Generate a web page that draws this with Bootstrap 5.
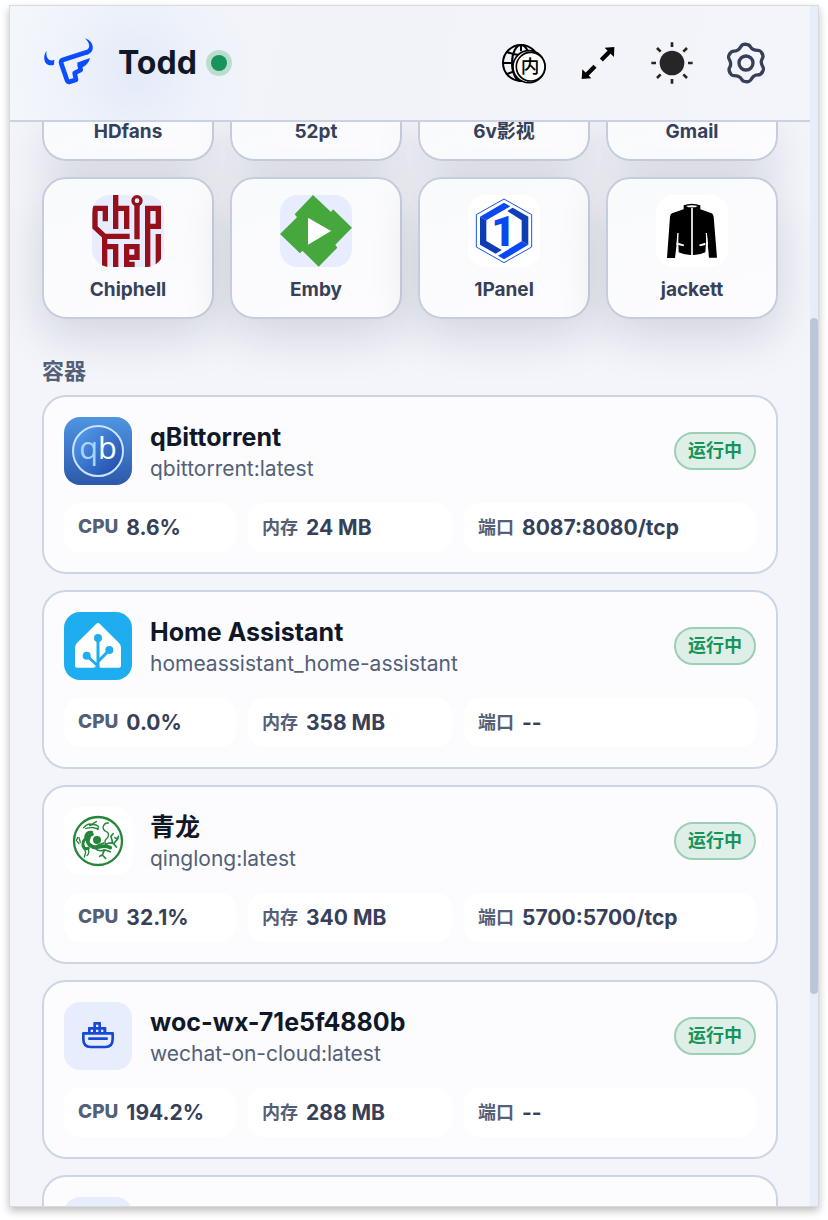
<!DOCTYPE html>
<html lang="zh-CN">
<head>
  <meta charset="UTF-8" />
  <meta name="viewport" content="width=device-width, initial-scale=1.0"/>
  <title>Todd</title>

  <!-- Bootstrap 5 CSS -->
  <link href="https://cdn.jsdelivr.net/npm/bootstrap@5.3.2/dist/css/bootstrap.min.css" rel="stylesheet" />

  <style>
    body {
      background: #fff;
      color: #374059;
      font-family: Inter, 'Noto Sans CJK SC', sans-serif;
    }

    .app-page {
      height: 100vh;
      padding: 5px 9px 13px 9px;
    }

    .app-window {
      border: 1px solid #d9dade;
      box-shadow: 0 4px 8px rgba(0, 0, 0, 0.25);
      background: #f4f5fb;
    }

    /* Header */
    .app-header {
      position: relative;
      z-index: 1;
      height: 116px;
      padding: 0 32px;
      border-bottom: 2px solid #c8d2e2;
      background: radial-gradient(circle at 125px 66px, #e3eaf8 0, rgba(235, 240, 250, 0.6) 70px, rgba(243, 244, 249, 0) 120px), linear-gradient(100deg, #f3f6fb, #f2f3f9 40%, #f4f5fa);
    }

    .brand-name {
      margin-left: 24px;
      font-size: 32px;
      line-height: 40px;
      font-weight: 700;
      color: #101828;
    }

    .online-dot {
      width: 16px;
      height: 16px;
      margin-left: 14px;
      border-radius: 50%;
      background: #18935a;
      box-shadow: 0 0 0 5px #bbddd0;
    }

    .tool-list {
      gap: 10px;
    }

    .tool-btn {
      width: 64px;
      height: 64px;
      padding: 0;
      border: 0;
      background: none;
    }

    /* Bookmark tiles */
    .app-main {
      padding: 0 32px;
    }

    .tile-grid {
      display: grid;
      grid-template-columns: repeat(4, 1fr);
      gap: 16px;
    }

    .tile {
      padding: 16px 16px 15px;
      border: 2px solid #c5cddd;
      border-radius: 24px;
      background: linear-gradient(160deg, #f9fafc, #fcfcfe);
      box-shadow: 0 16px 48px rgba(15, 23, 42, 0.15);
      color: #374059;
      font-size: 19px;
      line-height: 24px;
      font-weight: 700;
      text-decoration: none;
    }

    .tile-clipped {
      height: 39px;
      padding: 0 16px 18px;
      border-top: 0;
      border-radius: 0 0 24px 24px;
      line-height: 18px;
    }

    .tile-icon {
      width: 72px;
      height: 72px;
      margin-bottom: 11px;
      border-radius: 18px;
      background: #e7ecfe;
    }

    /* Containers */
    .section-title {
      margin: 36px 0 8px;
      font-size: 22px;
      line-height: 32px;
      font-weight: 700;
      color: #536077;
    }

    .box-card {
      padding: 20px;
      border: 2px solid #ccd5e3;
      border-radius: 24px;
      background: #fcfcfe;
    }

    .box-icon {
      width: 68px;
      height: 68px;
      border-radius: 16px;
      background: #e7edfd;
    }

    .icon-white {
      background: #fff;
    }

    .box-head {
      gap: 18px;
    }

    .box-text {
      padding-top: 4px;
    }

    .box-name {
      margin: 0;
      font-size: 25px;
      line-height: 32px;
      font-weight: 700;
      color: #101828;
    }

    .box-image {
      margin: 0;
      font-size: 21px;
      line-height: 32px;
      color: #536077;
    }

    .state-pill {
      padding: 4px 12px;
      border: 2px solid #9dcfb7;
      border-radius: 19px;
      background: #deefe8;
      color: #18935a;
      font-size: 18px;
      line-height: 26px;
      font-weight: 700;
    }

    .stat-grid {
      display: grid;
      grid-template-columns: 43fr 51fr 73fr;
      gap: 12px;
      margin: 18px 0 0;
    }

    .stat {
      height: 49px;
      padding: 0 14px;
      border-radius: 16px;
      background: #fff;
      font-weight: 700;
      gap: 8px;
    }

    .stat dt {
      font-size: 18px;
      color: #536077;
    }

    .stat dd {
      margin: 0;
      font-size: 21px;
    }

    .stat dt.latin {
      font-size: 19px;
      font-weight: 800;
    }

    /* Scroll track */
    .scroll-track {
      width: 8px;
      background: #e7eef9;
    }

    .scroll-thumb {
      flex: 676 0 0;
      border-radius: 4px;
      background: #bdc6d9;
    }

    .scroll-before {
      flex: 312 0 0;
    }

    .scroll-after {
      flex: 212 0 0;
    }
  </style>
</head>
<body>

<svg class="d-none" aria-hidden="true">
  <symbol id="ship" viewBox="102 96 204 204">
    <path d="M160 190H248V207Q248 231 226 231H182Q160 231 160 207Z" fill="none" stroke="#1748d8" stroke-width="8" stroke-linejoin="round"/>
    <path d="M178 206H230" stroke="#1748d8" stroke-width="8" stroke-linecap="round"/>
    <path d="M190 158Q190 156 192 156H211Q213 156 213 158V171H227Q229 171 229 173V188H174V173Q174 171 176 171H190Z" fill="#1748d8"/>
    <path d="M198 164h7v7h-7zM182 179h7v7h-7zM198 179h7v7h-7zM213 179h7v7h-7z" fill="#e7edfd"/>
  </symbol>
</svg>

<div class="app-page">
  <div class="app-window d-flex h-100 overflow-hidden">
    <div class="d-flex flex-column flex-grow-1 overflow-hidden">

      <!-- Header -->
      <header class="app-header d-flex align-items-center flex-shrink-0">
        <svg width="52" height="50" viewBox="126 114 156 150" aria-hidden="true">
          <path d="M140 153C131 163 131 180 137 189C143 197 154 197 162 194L163 179C155 183 148 181 144 176C139 170 138 161 140 153Z" fill="#0b4dff"/>
          <path d="M254 115C270 119 281 133 278 148C276 157 269 162 260 164L256 152C266 148 269 142 267 133C265 125 260 120 254 115Z" fill="#0b4dff"/>
          <path d="M262 156L190 179Q181 182 184 191L201 241Q203 247 209 245L228 239L224 219L242 210L239 195L256 187" fill="none" stroke="#0b4dff" stroke-width="14" stroke-linejoin="round"/>
          <path d="M231 188L270 174Q266 193 247 202L240 204Z" fill="#0b4dff"/>
        </svg>
        <h1 class="brand-name mb-0">Todd</h1>
        <span class="online-dot"></span>
        <div class="tool-list d-flex ms-auto">
          <button type="button" class="tool-btn" aria-label="内">
            <svg width="46" height="42" viewBox="64 122 138 126">
              <g fill="none" stroke="#000" stroke-width="6">
                <circle cx="124" cy="185" r="54"/>
                <ellipse cx="124" cy="185" rx="27" ry="54"/>
                <path d="M70 185H120M124 131V150M82 152Q120 170 166 152M82 218Q96 211 112 209"/>
              </g>
              <circle cx="148" cy="196" r="48" fill="#fff" stroke="#000" stroke-width="5"/>
              <circle cx="153" cy="196" r="43" fill="#fff" stroke="#000" stroke-width="5"/>
              <text x="151" y="216" text-anchor="middle" font-size="56" font-weight="500">内</text>
            </svg>
          </button>
          <button type="button" class="tool-btn" aria-label="全屏">
            <svg width="36" height="36" viewBox="300 135 108 108">
              <path d="M364 180L390 154M345 199L319 225" stroke="#000" stroke-width="13"/>
              <path d="M403 141L402 171L374 143ZM305 237L307 208L334 235Z"/>
            </svg>
          </button>
          <button type="button" class="tool-btn" aria-label="主题">
            <svg width="44" height="44" viewBox="-66 -66 132 132" fill="#262626">
              <circle r="37"/>
              <path d="M0-62V-48M0 62V48M-62 0H-48M62 0H48M-45-45L-34-34M45 45L34 34M-45 45L-34 34M45-45L34-34" stroke="#262626" stroke-width="8"/>
            </svg>
          </button>
          <button type="button" class="tool-btn" aria-label="设置">
            <svg width="44" height="44" viewBox="-66 -66 132 132" fill="none" stroke="#374059" stroke-width="10" stroke-linecap="round">
              <circle r="21"/>
              <g id="gear-half">
                <path id="gear-arc" d="M0-56C17-56 9-45 23-40C37-35 42-43 48.500-28"/>
                <use href="#gear-arc" transform="rotate(60)"/>
                <use href="#gear-arc" transform="rotate(120)"/>
              </g>
              <use href="#gear-half" transform="rotate(180)"/>
            </svg>
          </button>
        </div>
      </header>

      <main class="app-main flex-grow-1 overflow-hidden">
        <!-- Bookmarks -->
        <div class="tile-grid">
          <a href="#" class="tile tile-clipped d-flex flex-column align-items-center justify-content-end"><span>HDfans</span></a>
          <a href="#" class="tile tile-clipped d-flex flex-column align-items-center justify-content-end"><span>52pt</span></a>
          <a href="#" class="tile tile-clipped d-flex flex-column align-items-center justify-content-end"><span>6v影视</span></a>
          <a href="#" class="tile tile-clipped d-flex flex-column align-items-center justify-content-end"><span>Gmail</span></a>

          <a href="#" class="tile d-flex flex-column align-items-center">
            <svg class="tile-icon" viewBox="186 90 216 216">
              <g fill="none" stroke="#960f1b" stroke-width="16">
                <path d="M226 169V130H195V187L224 214H299"/>
                <path d="M257 90V192M257 130H290V192"/>
                <path d="M321 120V223"/>
                <circle cx="321" cy="107" r="12" stroke-width="10"/>
                <path d="M353 306V130H385V184H353M385 207V306"/>
                <path d="M224 210V306M224 245H257V306"/>
                <path d="M314 298H290V245H321V277H290"/>
              </g>
            </svg>
            <span>Chiphell</span>
          </a>
          <a href="#" class="tile d-flex flex-column align-items-center">
            <svg class="tile-icon" viewBox="750 90 216 216">
              <path d="M849 90L903 141L909 133L966 188L916 239L922 248L866 305L817 257L810 265L750 207L801 157L794 148Z" fill="#46a83c"/>
              <path d="M834 158L903 198L834 239Z" fill="#fff"/>
            </svg>
            <span>Emby</span>
          </a>
          <a href="#" class="tile d-flex flex-column align-items-center">
            <svg class="tile-icon icon-white" viewBox="204 90 216 216">
              <path d="M312 102L395 149V246L312 293L229 246V149Z" fill="none" stroke="#1c55e8" stroke-width="3"/>
              <path d="M240 155L312 113L331 124L259 166Z" fill="#0a48f0"/>
              <path d="M240 155L259 166V228L305 255L287 266L240 239Z" fill="#0f3db5"/>
              <path d="M385 239L312 283L294 272L365 229Z" fill="#0a48f0"/>
              <path d="M322 138L338 128L385 155V239L365 229V166Z" fill="#0f3db5"/>
              <text x="310" y="243" text-anchor="middle" font-family="Roboto" font-size="126" font-weight="900" fill="#0a48f0">1</text>
            </svg>
            <span>1Panel</span>
          </a>
          <a href="#" class="tile d-flex flex-column align-items-center">
            <svg class="tile-icon icon-white" viewBox="768 90 216 216">
              <path d="M851 121Q875 112 901 121V133L935 145Q940 148 941 155L951 278H927L920 204L916 262Q896 272 875 270Q854 271 836 262L834 204L825 279H801L810 155Q811 148 816 145L851 133Z"/>
              <path d="M876 128V272" stroke="#fff" stroke-width="5"/>
              <path d="M858 123Q875 119 893 123L886 127H865ZM834 233L853 239L850 244L835 240ZM916 233L897 239L900 244L916 240Z" fill="#fff"/>
              <path d="M834 204L831 240M919 204L922 240" stroke="#fff" stroke-width="4"/>
            </svg>
            <span>jackett</span>
          </a>
        </div>

        <!-- Containers -->
        <h2 class="section-title">容器</h2>
        <div class="d-grid gap-3">
          <section class="box-card">
            <div class="box-head d-flex align-items-center">
              <svg class="box-icon" viewBox="102 81 204 204">
                <defs>
                  <linearGradient id="qb-back" x2="0" y2="1"><stop stop-color="#4f95e2"/><stop offset="1" stop-color="#2d58ab"/></linearGradient>
                  <linearGradient id="qb-disc" x2="1" y2="1"><stop stop-color="#5aa2f2"/><stop offset="1" stop-color="#1b46a6"/></linearGradient>
                </defs>
                <path d="M102 81h204v204h-204z" fill="url(#qb-back)"/>
                <circle cx="204" cy="183" r="75" fill="url(#qb-disc)" stroke="#c9e4fd" stroke-width="6"/>
                <text x="204" y="206" text-anchor="middle" font-family="Open Sans" font-size="92" fill="#a9d6fc">q<tspan fill="#fff">b</tspan></text>
              </svg>
              <div class="box-text flex-grow-1">
                <h3 class="box-name">qBittorrent</h3>
                <p class="box-image">qbittorrent:latest</p>
              </div>
              <span class="state-pill">运行中</span>
            </div>
            <dl class="stat-grid">
              <div class="stat d-flex align-items-center"><dt class="latin">CPU</dt><dd>8.6%</dd></div>
              <div class="stat d-flex align-items-center"><dt>内存</dt><dd>24 MB</dd></div>
              <div class="stat d-flex align-items-center"><dt>端口</dt><dd>8087:8080/tcp</dd></div>
            </dl>
          </section>

          <section class="box-card">
            <div class="box-head d-flex align-items-center">
              <svg class="box-icon" viewBox="102 66 204 204">
                <path d="M102 66h204v204h-204z" fill="#1eaef0"/>
                <path d="M199 101Q204 97 209 101L267 159Q273 165 273 173V227Q273 233 267 233H141Q135 233 135 227V173Q135 165 141 159Z" fill="#fff"/>
                <path d="M204 144V236M204 228L170 197M204 215L238 180" stroke="#1eaef0" stroke-width="9"/>
                <path d="M190 233H211L204 224Z" fill="#1eaef0"/>
                <g fill="#1eaef0"><circle cx="204" cy="144" r="12"/><circle cx="170" cy="197" r="12"/><circle cx="238" cy="180" r="12"/></g>
              </svg>
              <div class="box-text flex-grow-1">
                <h3 class="box-name">Home Assistant</h3>
                <p class="box-image">homeassistant_home-assistant</p>
              </div>
              <span class="state-pill">运行中</span>
            </div>
            <dl class="stat-grid">
              <div class="stat d-flex align-items-center"><dt class="latin">CPU</dt><dd>0.0%</dd></div>
              <div class="stat d-flex align-items-center"><dt>内存</dt><dd>358 MB</dd></div>
              <div class="stat d-flex align-items-center"><dt>端口</dt><dd>--</dd></div>
            </dl>
          </section>

          <section class="box-card">
            <div class="box-head d-flex align-items-center">
              <svg class="box-icon icon-white" viewBox="27 36 204 204">
                <g fill="none" stroke="#24863a" stroke-linecap="round" stroke-linejoin="round">
                  <circle cx="129" cy="138" r="72" stroke-width="7"/>
                  <path d="M86 98Q98 84 110 88L124 80M92 100L112 97L130 102M104 92Q118 84 130 94L128 104" stroke-width="4"/>
                  <path d="M110 112Q96 110 92 124M112 118Q96 124 86 138Q80 152 90 162L100 160" stroke-width="9"/>
                  <path d="M102 128Q94 140 104 150Q116 160 132 156Q150 150 166 158" stroke-width="11"/>
                  <path d="M88 160L92 172L88 186M98 160Q106 172 96 182M72 146L64 136L68 128M76 142L72 128" stroke-width="4"/>
                  <path d="M160 84Q146 84 144 98Q146 108 158 112Q164 120 156 130Q146 138 152 148" stroke-width="4"/>
                  <path d="M152 148Q168 140 176 146L188 132L190 124M176 146L184 156M172 140L168 124L174 116M188 132L180 128" stroke-width="5"/>
                  <path d="M120 160Q134 172 148 164L166 170M148 166L142 180L152 190M142 180L134 184M124 152L146 144" stroke-width="5"/>
                </g>
                <circle cx="126" cy="135" r="12" fill="#24863a"/>
              </svg>
              <div class="box-text flex-grow-1">
                <h3 class="box-name">青龙</h3>
                <p class="box-image">qinglong:latest</p>
              </div>
              <span class="state-pill">运行中</span>
            </div>
            <dl class="stat-grid">
              <div class="stat d-flex align-items-center"><dt class="latin">CPU</dt><dd>32.1%</dd></div>
              <div class="stat d-flex align-items-center"><dt>内存</dt><dd>340 MB</dd></div>
              <div class="stat d-flex align-items-center"><dt>端口</dt><dd>5700:5700/tcp</dd></div>
            </dl>
          </section>

          <section class="box-card">
            <div class="box-head d-flex align-items-center">
              <svg class="box-icon"><use href="#ship"/></svg>
              <div class="box-text flex-grow-1">
                <h3 class="box-name">woc-wx-71e5f4880b</h3>
                <p class="box-image">wechat-on-cloud:latest</p>
              </div>
              <span class="state-pill">运行中</span>
            </div>
            <dl class="stat-grid">
              <div class="stat d-flex align-items-center"><dt class="latin">CPU</dt><dd>194.2%</dd></div>
              <div class="stat d-flex align-items-center"><dt>内存</dt><dd>288 MB</dd></div>
              <div class="stat d-flex align-items-center"><dt>端口</dt><dd>--</dd></div>
            </dl>
          </section>

          <section class="box-card">
            <svg class="box-icon"><use href="#ship"/></svg>
          </section>
        </div>
      </main>
    </div>

    <div class="scroll-track d-flex flex-column flex-shrink-0" aria-hidden="true">
      <div class="scroll-before"></div>
      <div class="scroll-thumb"></div>
      <div class="scroll-after"></div>
    </div>
  </div>
</div>

<!-- Bootstrap 5 JS -->
<script src="https://cdn.jsdelivr.net/npm/bootstrap@5.3.2/dist/js/bootstrap.bundle.min.js"></script>

</body>
</html>
